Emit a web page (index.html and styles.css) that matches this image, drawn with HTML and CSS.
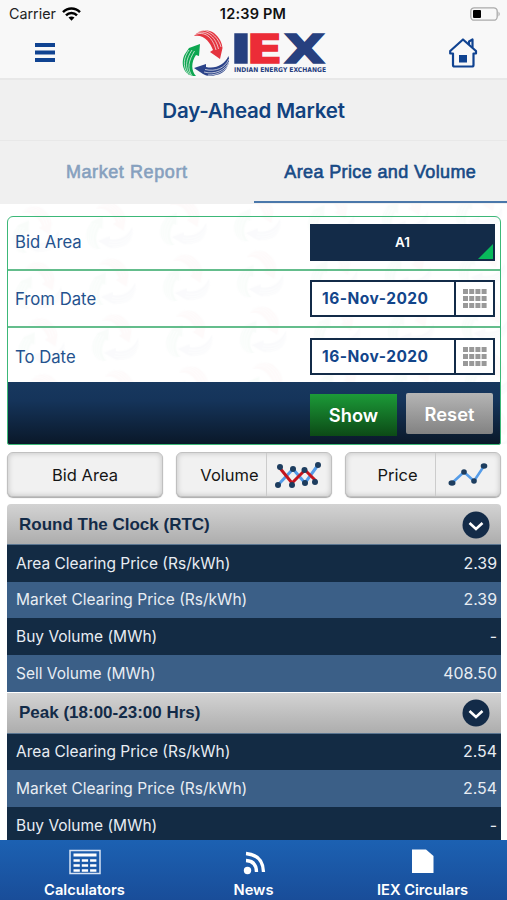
FILE: index.html
```html
<!DOCTYPE html>
<html lang="en">
<head>
<meta charset="utf-8">
<title>Day-Ahead Market</title>
<link rel="stylesheet" href="styles.css">
</head>
<body>
<svg class="defs" width="0" height="0" aria-hidden="true">
  <defs>
    <g id="swirl">
      <path d="M12 5C16 -1 25 -3 32 2C38 7 40 12 40.500 17L38 28L28 21L31 19C28 11 22 3 12 5Z" fill="#e4343f"/>
      <path d="M10 45C0 42 -1 30 3 23L7 17L18 13L17 25L14 24C9 31 9 40 14 45Z" fill="#0da650"/>
      <path d="M46.500 25C49 33 43 43 34 44C29 45.500 24 45 21 43L12 37L24 33L24 36C34 38 42 34 46.500 25Z" fill="#2b4389"/>
      <g fill="none" stroke="#f8f8f8" stroke-width=".7">
        <path d="M12 4C23 -1 31 7 34 19M15 1.500C26 -1 34 7 36.500 18M20 -1C30 0 37 8 39 16"/>
        <path d="M9 45C2 37 4 28 10 19M11 46C4 38 7 29 12.500 20M6 43C0 35 2 26 7 19"/>
        <path d="M23 38.500C34 41 43 37 47 28M22 41C33 44 43 39 47 31M26 44C36 44 43 40 46 34"/>
      </g>
    </g>
    <g id="chevron">
      <circle cx="14" cy="14" r="13.500" fill="#132b48"/>
      <path d="M7.500 12L14 18L20.500 12" fill="none" stroke="#fff" stroke-width="2.600"/>
    </g>
    <g id="grid" fill="#999">
      <path d="M0 0h5v5h-5zM6.200 0h5v5h-5zM12.400 0h5v5h-5zM18.600 0h5v5h-5zM0 7h5v5h-5zM6.200 7h5v5h-5zM12.400 7h5v5h-5zM18.600 7h5v5h-5zM0 14h5v5h-5zM6.200 14h5v5h-5zM12.400 14h5v5h-5zM18.600 14h5v5h-5z"/>
    </g>
    <pattern id="marks" width="74" height="56" patternUnits="userSpaceOnUse" patternTransform="rotate(-3)">
      <use href="#swirl" x="10" y="5"/>
    </pattern>
  </defs>
</svg>
<div class="app">
  <header class="top">
    <div class="status">
      <span class="carrier">Carrier
        <svg width="19" height="14" viewBox="0 0 19 14"><g fill="none" stroke="#000" stroke-width="2.500"><path d="M1 5.200C6 .3 13 .3 18 5.200"/><path d="M4 8.300C7 5.300 12 5.300 15 8.300"/></g><path d="M6.500 10.600C8.300 9 10.700 9 12.500 10.600L9.500 13.800Z"/></svg>
      </span>
      <span class="clock">12:39 PM</span>
      <svg class="battery" width="32" height="14" viewBox="0 0 32 14"><rect x=".8" y=".8" width="26.400" height="12.400" rx="3.500" fill="none" stroke="#aaa" stroke-width="1.300"/><rect x="3" y="3" width="8" height="8" rx="1" fill="#000"/><path d="M28.500 4.500q2.500 2.500 0 5z" fill="#aaa"/></svg>
    </div>
    <div class="nav">
      <svg class="menu" width="20" height="20" viewBox="0 0 20 20"><path d="M0 2h20M0 9.500h20M0 17h20" stroke="#104391" stroke-width="4"/></svg>
      <svg class="logo" width="146" height="48" viewBox="0 0 146 48">
        <use href="#swirl" transform="translate(1 2)"/>
        <g class="logo-letters">
          <text x="49" y="34.200" textLength="22" lengthAdjust="spacingAndGlyphs" fill="#27407f" stroke="#27407f">I</text>
          <text x="65.500" y="34.200" textLength="36" lengthAdjust="spacingAndGlyphs" fill="#ec2c37" stroke="#ec2c37">E</text>
          <text x="103" y="34.200" textLength="41" lengthAdjust="spacingAndGlyphs" fill="#27407f" stroke="#27407f">X</text>
        </g>
        <text class="logo-sub" x="53" y="43" textLength="92" lengthAdjust="spacingAndGlyphs" fill="#27407f">INDIAN ENERGY EXCHANGE</text>
      </svg>
      <svg class="home" width="30" height="30" viewBox="0 0 30 30"><g fill="none" stroke="#104391" stroke-width="2.200" stroke-linejoin="round" stroke-linecap="round"><path d="M5 15.500H2.200V13L15 1.500L28 13v2.500H25.500V27q0 1.500-1.500 1.500H6.500Q5 28.500 5 27Z"/><path d="M21 6V3.500L24.500 1.500V9"/></g><rect x="11" y="17" width="8" height="7.500" fill="#104391"/></svg>
    </div>
  </header>
  <h1 class="title">Day-Ahead Market</h1>
  <nav class="tabs">
    <a class="tab tab-report">Market Report</a>
    <a class="tab tab-active">Area Price and Volume</a>
  </nav>
  <main class="content">
    <svg class="watermark" width="507" height="240"><rect width="507" height="240" fill="url(#marks)"/></svg>
    <section class="form">
      <div class="field"><label>Bid Area</label><div class="select">A1</div></div>
      <div class="field"><label>From Date</label><div class="date"><span>16-Nov-2020</span><i><svg width="24" height="20"><use href="#grid"/></svg></i></div></div>
      <div class="field field-last"><label>To Date</label><div class="date"><span>16-Nov-2020</span><i><svg width="24" height="20"><use href="#grid"/></svg></i></div></div>
      <div class="actions"><button class="btn show">Show</button><button class="btn reset">Reset</button></div>
    </section>
    <div class="switches">
      <button class="switch"><span class="switch-text">Bid Area</span></button>
      <button class="switch"><span class="switch-text push">Volume</span><span class="switch-icon">
        <svg width="48" height="28" viewBox="0 0 48 28"><path d="M3 24L18 8L30 22L43 4" fill="none" stroke="#559ce8" stroke-width="3"/><path d="M4 6L17 22L30 9L41 20" fill="none" stroke="#c4141d" stroke-width="3"/><g fill="#1d3d5f"><circle cx="3" cy="24" r="3"/><circle cx="18" cy="8" r="3"/><circle cx="30" cy="22" r="3"/><circle cx="43" cy="4" r="3"/><circle cx="5" cy="6" r="3"/><circle cx="17" cy="24" r="3"/><circle cx="29.500" cy="9" r="3"/><circle cx="40" cy="21" r="3"/></g></svg></span></button>
      <button class="switch"><span class="switch-text price">Price</span><span class="switch-icon">
        <svg width="40" height="24" viewBox="0 0 40 24"><path d="M4 20L16 9L26 18L36 3" fill="none" stroke="#559ce8" stroke-width="2.500"/><g fill="#1d3d5f"><ellipse cx="4" cy="20" rx="3.500" ry="2.700"/><circle cx="16" cy="9" r="2.800"/><circle cx="26" cy="18" r="2.800"/><ellipse cx="36" cy="3" rx="3.300" ry="2.700"/></g></svg></span></button>
    </div>
    <section class="group">
      <h2 class="rtc">Round The Clock (RTC)<svg width="28" height="28"><use href="#chevron"/></svg></h2>
      <div class="row"><span>Area Clearing Price (Rs/kWh)</span><b>2.39</b></div>
      <div class="row alt"><span>Market Clearing Price (Rs/kWh)</span><b>2.39</b></div>
      <div class="row"><span>Buy Volume (MWh)</span><b>-</b></div>
      <div class="row alt"><span>Sell Volume (MWh)</span><b>408.50</b></div>
    </section>
    <section class="group second">
      <h2>Peak (18:00-23:00 Hrs)<svg width="28" height="28"><use href="#chevron"/></svg></h2>
      <div class="row"><span>Area Clearing Price (Rs/kWh)</span><b>2.54</b></div>
      <div class="row alt"><span>Market Clearing Price (Rs/kWh)</span><b>2.54</b></div>
      <div class="row"><span>Buy Volume (MWh)</span><b>-</b></div>
    </section>
  </main>
  <footer class="bottom">
    <a><svg width="32" height="26" viewBox="0 0 32 26"><rect x="1" y="1.500" width="30" height="23" fill="none" stroke="#d8e4f5" stroke-width="1.500"/><path d="M4.500 6h23" stroke="#fff" stroke-width="3"/><path d="M4.500 11.500h23M4.500 16.500h23M4.500 21.500h23" stroke="#fff" stroke-width="2.600" stroke-dasharray="6.300 2"/></svg><span>Calculators</span></a>
    <a><svg width="24" height="26" viewBox="0 0 24 26"><circle cx="5.500" cy="21.500" r="3.700" fill="#fff"/><path d="M4 11.500Q14.500 12 14.500 23M4 4.500Q21 6 21.500 23" fill="none" stroke="#fff" stroke-width="3.300"/></svg><span>News</span></a>
    <a><svg width="22" height="26" viewBox="0 0 22 26"><path d="M0 .5H14L21.500 7V24H0Z" fill="#fff"/></svg><span>IEX Circulars</span></a>
  </footer>
</div>
</body>
</html>
```
FILE: styles.css
```css
* { box-sizing: border-box; }
body { margin: 0; font-family: Inter, "Liberation Sans", sans-serif; background: #fff; }
button { font: inherit; border: 0; padding: 0; }
svg { display: block; flex: none; }
.defs { position: absolute; }
.app { width: 507px; height: 900px; display: flex; flex-direction: column; overflow: hidden; }

.top { flex: none; height: 80px; background: #f8f8f8; border-bottom: 2px solid #e8e8e8; }
.status { height: 27px; padding: 0 7px 0 9px; display: grid; grid-template-columns: 1fr auto 1fr; align-items: center; font-size: 14.300px; color: #222; }
.carrier { display: flex; align-items: center; gap: 6px; }
.clock { font-weight: 600; font-size: 14.500px; color: #111; letter-spacing: .2px; margin-left: -3px; }
.battery { justify-self: end; margin-right: -2px; }
.nav { height: 51px; padding: 0 29px 0 35px; display: grid; grid-template-columns: 1fr 146px 1fr; align-items: center; }
.logo { margin-left: -3px; overflow: visible; }
.home { justify-self: end; }
.logo-letters { font: bold 39px "DejaVu Sans", sans-serif; stroke-width: 1.500px; }
.logo-sub { font: bold 6.500px "DejaVu Sans", sans-serif; }

.title { flex: none; height: 61px; margin: 0; background: #f0f0f0; border-bottom: 1px solid #e8e8e8; display: flex; align-items: center; justify-content: center; color: #11427f; font-size: 20.500px; font-weight: 600; letter-spacing: -.2px; }
.tabs { flex: none; height: 63px; display: flex; background: #f0f0f0; }
.tab { flex: 1; display: flex; align-items: center; justify-content: center; border-bottom: 2px solid transparent; height: 62px; padding-top: 3px; font: 18px "Liberation Sans", sans-serif; color: #86a0be; -webkit-text-stroke: .6px currentColor; letter-spacing: .58px; }
.tab-active { color: #174a86; border-bottom-color: #4a77aa; letter-spacing: .37px; }

.content { flex: 1; min-height: 0; overflow: hidden; position: relative; padding: 12px 6px 0 7px; }
.watermark { position: absolute; left: 0; top: 0; opacity: .018; }
.form { position: relative; height: 229px; border: 1.500px solid #3cb878; border-radius: 6px 6px 2px 2px; overflow: hidden; }
.field { height: 57px; padding: 0 5px 0 7px; display: flex; align-items: center; justify-content: space-between; border-bottom: 2px solid #64bd8c; font-size: 16.700px; color: #24528e; }
.field:first-child { height: 54px; padding-bottom: 2px; }
.field-last { height: 54px; border-bottom: 0; padding-top: 3px; }
.select { width: 185px; height: 37px; background: #132b48; color: #fff; font-weight: 600; font-size: 13.500px; display: flex; align-items: center; justify-content: center; position: relative; }
.select::after { content: ""; position: absolute; right: 2px; bottom: 2px; border-style: solid; border-width: 0 0 15px 15px; border-color: transparent transparent #08b85b transparent; }
.date { width: 185px; height: 37px; border: 2px solid #132b48; background: #fff; display: flex; color: #12458a; font-weight: 700; font-size: 15.500px; letter-spacing: .5px; }
.date span { flex: 1; display: flex; align-items: center; padding-left: 10px; }
.date i { width: 39px; border-left: 2px solid #132b48; display: flex; align-items: center; justify-content: center; }
.actions { height: 62px; background: linear-gradient(#17385f, #15345a 30%, #0a1829); display: flex; gap: 9px; padding: 11px 7px 0; justify-content: flex-end; }
.btn { color: #fff; font-weight: 600; font-size: 18.300px; height: 42px; }
.show { width: 87px; margin-top: 1px; background: linear-gradient(#1c9a38, #0c4a16); }
.reset { width: 87px; height: 41px; border-radius: 2px; background: linear-gradient(#b5b5b5, #828282); }

.switches { position: relative; display: flex; gap: 13px; margin-top: 7px; }
.switch { flex: 1; height: 45px; border-radius: 6px; background: #f1f1f1; border: 1px solid #c0c0c0; box-shadow: inset 0 0 5px 1px #ccc, 0 1px 1px #aaa; display: flex; font-size: 16.500px; color: #151515; }
.switch-text { flex: 1; display: flex; align-items: center; justify-content: center; height: 100%; }
.push { padding-left: 16px; }
.price { padding-left: 14px; }
.switch-icon { width: 65px; height: 100%; border-left: 1px solid #ccc; display: flex; align-items: center; justify-content: center; }

.group { position: relative; margin-top: 7px; }
.second { margin-top: 1px; }
.group h2 { margin: 0; height: 41px; padding: 1px 11px 0 12px; display: flex; align-items: center; justify-content: space-between; background: linear-gradient(#d3d3d3, #adadad); border-bottom: 1px solid #5a7590; color: #132b48; font: bold 17px "Liberation Sans", sans-serif; }
.rtc { border-radius: 4px 4px 0 0; }
.row { height: 36.670px; padding: 0 4px 0 9px; display: flex; align-items: center; justify-content: space-between; background: #132b44; color: #e8edf3; font-size: 15.500px; }
.row b { font-weight: 400; font-size: 15.900px; }
.alt { background: #3b5f87; }

.bottom { flex: none; height: 60px; display: flex; background: linear-gradient(#1c61b2, #194d99); position: relative; color: #fff; }
.bottom a { flex: 1; display: flex; flex-direction: column; align-items: center; padding-top: 9px; gap: 6px; font-size: 14.700px; font-weight: 600; line-height: 18px; }
```
